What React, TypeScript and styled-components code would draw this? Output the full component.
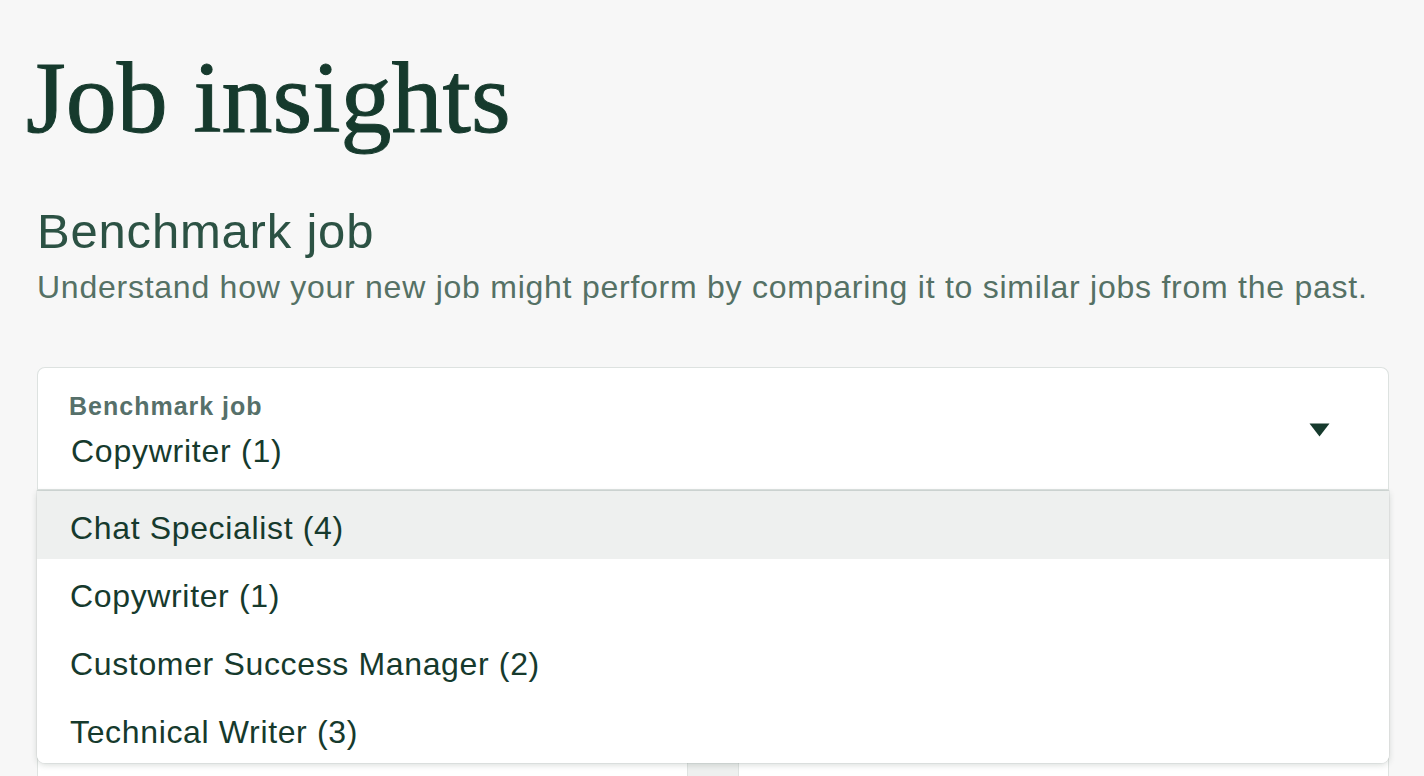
import React from "react";
import styled, { createGlobalStyle } from "styled-components";

const Global = createGlobalStyle`
  html, body { margin: 0; padding: 0; background: #f7f7f7; }
  body { font-family: "Liberation Sans", Arial, sans-serif; overflow: hidden; }
`;

const Page = styled.div`
  padding: 40px 35px 0 37px;
  width: 1424px;
  height: 776px;
  box-sizing: border-box;
  overflow: hidden;
`;

const Title = styled.h1`
  margin: 0 0 0 -11px;
  font-family: "Liberation Serif", "Times New Roman", serif;
  font-weight: 400;
  font-size: 102px;
  line-height: 116px;
  color: #163a2d;
  -webkit-text-stroke: 1px #163a2d;
`;

const Heading = styled.h2`
  margin: 47px 0 0 0;
  font-weight: 400;
  font-size: 49px;
  line-height: 56px;
  letter-spacing: 0.8px;
  color: #2c5244;
`;

const Sub = styled.p`
  margin: 8px 0 0 0;
  font-size: 32px;
  line-height: 40px;
  color: #557165;
  letter-spacing: 0.75px;
`;

const Field = styled.div`
  position: relative;
  margin-top: 60px;
`;

const SelectBox = styled.div`
  display: flex;
  align-items: center;
  height: 124px;
  box-sizing: border-box;
  background: #ffffff;
  border: 1px solid #dde2e0;
  border-bottom: 2px solid #dde2e0;
  border-radius: 8px 8px 0 0;
  padding: 0 58px 0 31px;
`;

const SelectText = styled.div`
  flex: 1;
  display: flex;
  flex-direction: column;
  padding-top: 4px;
`;

const Label = styled.span`
  font-weight: 700;
  font-size: 25px;
  line-height: 30px;
  letter-spacing: 1px;
  color: #56706a;
`;

const Value = styled.span`
  margin-top: 10px;
  font-size: 32px;
  line-height: 40px;
  letter-spacing: 0.75px;
  color: #163a2d;
  padding-left: 2px;
`;

const Caret = styled.svg`
  width: 21px;
  height: 14px;
  margin-top: 2px;
`;

const Menu = styled.ul`
  position: absolute;
  left: 0;
  right: 0;
  top: 124px;
  margin: 0;
  padding: 0;
  list-style: none;
  background: #ffffff;
  border-radius: 0 0 8px 8px;
  box-shadow: 0 2px 6px rgba(40, 60, 50, 0.18), 0 0 0 1px rgba(40, 60, 50, 0.05);
  overflow: hidden;
  z-index: 2;
`;

const Option = styled.li<{ $active?: boolean }>`
  height: 68px;
  display: flex;
  align-items: center;
  padding: 7px 0 0 33px;
  box-sizing: border-box;
  font-size: 32px;
  letter-spacing: 0.65px;
  color: #163a2d;
  background: ${(p) => (p.$active ? "#eef0ef" : "#ffffff")};
`;

const Below = styled.div`
  margin-top: 30px;
  display: grid;
  grid-template-columns: 651px 50px 1fr;
  height: 400px;
`;

const Panel = styled.div<{ $mid?: boolean }>`
  background: ${(p) => (p.$mid ? "#eef0ef" : "#ffffff")};
  border: 1px solid #dfe3e1;
  border-left-width: ${(p) => (p.$mid ? "0" : "1px")};
  border-right-width: ${(p) => (p.$mid ? "0" : "1px")};
`;

const options = [
  "Chat Specialist (4)",
  "Copywriter (1)",
  "Customer Success Manager (2)",
  "Technical Writer (3)",
];

export default function App() {
  return (
    <>
      <Global />
      <Page>
        <Title>Job insights</Title>
        <Heading>Benchmark job</Heading>
        <Sub>Understand how your new job might perform by comparing it to similar jobs from the past.</Sub>
        <Field>
          <SelectBox>
            <SelectText>
              <Label>Benchmark job</Label>
              <Value>Copywriter (1)</Value>
            </SelectText>
            <Caret viewBox="0 0 21 14">
              <path d="M0.5 0.5 H20.5 L10.5 13.5 Z" fill="#163a2d" />
            </Caret>
          </SelectBox>
          <Menu>
            {options.map((o, i) => (
              <Option key={o} $active={i === 0}>
                {o}
              </Option>
            ))}
          </Menu>
          <Below>
            <Panel />
            <Panel $mid />
            <Panel />
          </Below>
        </Field>
      </Page>
    </>
  );
}
